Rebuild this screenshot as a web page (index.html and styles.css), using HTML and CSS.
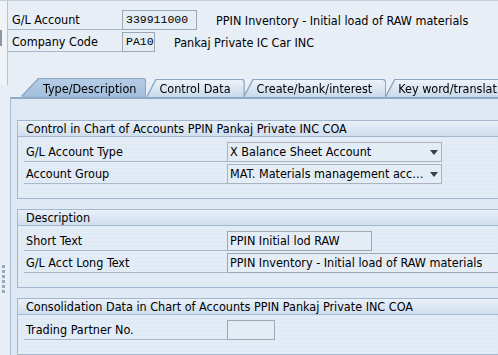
FILE: index.html
```html
<!DOCTYPE html>
<html lang="en">
<head>
    <meta charset="UTF-8">
    <title>Display G/L Account Centrally</title>
    <link rel="stylesheet" href="styles.css">
</head>
<body>
    <div class="screen">
        <div class="upper">
            <div class="gutter"><div class="nub"></div></div>
            <div class="upper-main">
                <div class="head">
                    <div class="row">
                        <span class="lbl">G/L Account</span>
                        <span class="field mono acct">339911000</span>
                        <span class="desc">PPIN Inventory - Initial load of RAW materials</span>
                    </div>
                    <div class="row">
                        <span class="lbl">Company Code</span>
                        <span class="field mono ccode">PA10</span>
                        <span class="desc">Pankaj Private IC Car INC</span>
                    </div>
                </div>

                <div class="tabs">
                    <div class="tab active"><div class="tab-face">Type/Description</div></div>
                    <div class="tab"><div class="tab-face">Control Data</div></div>
                    <div class="tab"><div class="tab-face">Create/bank/interest</div></div>
                    <div class="tab"><div class="tab-face">Key word/translation</div></div>
                </div>
            </div>
        </div>

        <div class="work">
            <div class="sash">
                <span class="grip"></span><span class="grip"></span><span class="grip"></span>
                <span class="grip"></span><span class="grip"></span><span class="grip"></span>
            </div>
            <div class="panel">
                <section class="group">
                    <div class="group-title">Control in Chart of Accounts PPIN Pankaj Private INC COA</div>
                    <div class="group-body">
                        <div class="row">
                            <span class="lbl">G/L Account Type</span>
                            <span class="field select">
                                <span class="select-text">X Balance Sheet Account</span>
                                <svg class="caret" width="8" height="5" viewBox="0 0 8 5"><polygon points="0,0 8,0 4,5" fill="#3a3f45"/></svg>
                            </span>
                        </div>
                        <div class="row">
                            <span class="lbl">Account Group</span>
                            <span class="field select">
                                <span class="select-text">MAT. Materials management accounts</span>
                                <svg class="caret" width="8" height="5" viewBox="0 0 8 5"><polygon points="0,0 8,0 4,5" fill="#3a3f45"/></svg>
                            </span>
                        </div>
                    </div>
                </section>

                <section class="group">
                    <div class="group-title">Description</div>
                    <div class="group-body">
                        <div class="row">
                            <span class="lbl">Short Text</span>
                            <span class="field short">PPIN Initial lod RAW</span>
                        </div>
                        <div class="row">
                            <span class="lbl">G/L Acct Long Text</span>
                            <span class="field long">PPIN Inventory - Initial load of RAW materials</span>
                        </div>
                    </div>
                </section>

                <section class="group">
                    <div class="group-title">Consolidation Data in Chart of Accounts PPIN Pankaj Private INC COA</div>
                    <div class="group-body">
                        <div class="row">
                            <span class="lbl">Trading Partner No.</span>
                            <span class="field partner"></span>
                        </div>
                    </div>
                </section>
            </div>
        </div>
    </div>
</body>
</html>
```

FILE: styles.css
```css
body {
    margin: 0;
    background-color: #e8eef6;
    font-family: "DejaVu Sans Condensed", "DejaVu Sans", sans-serif;
    font-stretch: condensed;
    font-size: 12.5px;
    color: #000;
    overflow: hidden;
}

.screen {
    width: 620px;
    height: 355px;
    overflow: hidden;
    border-top: 1px solid #c3d0de;
    box-sizing: border-box;
}

.upper {
    display: flex;
    align-items: flex-start;
}

.gutter {
    width: 7px;
    height: 84px;
    border-right: 1px solid #b4c2d2;
    background-color: #f0f4f9;
}

.nub {
    width: 2px;
    height: 16px;
    margin-top: 29px;
    background-color: #8e969f;
}

.upper-main {
    flex: 1;
}

.head {
    display: flex;
    flex-direction: column;
    gap: 2px;
    padding-top: 9px;
}

.row {
    display: flex;
    align-items: center;
    height: 20px;
}

.lbl {
    box-sizing: border-box;
    width: 114px;
    height: 20px;
    line-height: 20px;
    padding-left: 4px;
    border-bottom: 1px solid #a9b8c9;
    white-space: nowrap;
}

.field {
    box-sizing: border-box;
    height: 20px;
    line-height: 18px;
    padding: 0 3px;
    border: 1px solid #9ea8b3;
    background-color: #e4ecf5;
    white-space: nowrap;
    overflow: hidden;
}

.mono {
    font-family: "Liberation Mono", monospace;
    font-size: 11.5px;
}

.acct { width: 75px; }
.ccode { width: 33px; }

.desc {
    margin-left: 19px;
    white-space: nowrap;
}

/* tab strip */
.tabs {
    display: flex;
    align-items: flex-end;
    height: 19px;
    margin-top: 26px;
    padding-left: 14px;
}

.tab {
    margin-left: 1px;
    filter: drop-shadow(0 -1px 0 #8ea6c1) drop-shadow(1px 0 0 #8ea6c1) drop-shadow(-1px 0 0 #8ea6c1);
}

.tab.active {
    margin: 0 1px 0 0;
}

.tab-face {
    height: 17px;
    line-height: 17px;
    padding: 0 13px 0 12px;
    white-space: nowrap;
    border-top-right-radius: 3px;
    background: linear-gradient(#edf3f9, #c9d9eb);
    clip-path: polygon(9px 0, 100% 0, 100% 100%, 0 100%);
}

.tab.active .tab-face {
    height: 18px;
    line-height: 19px;
    padding: 0 9px 0 21px;
    background: linear-gradient(#b4cce6, #a3bedc);
    clip-path: polygon(17px 0, 100% 0, 100% 100%, 0 100%);
}

/* tab page */
.work {
    display: flex;
}

.sash {
    width: 10px;
    display: flex;
    flex-direction: column;
    gap: 2px;
    padding-top: 168px;
}

.grip {
    width: 3px;
    height: 3px;
    margin-left: 2px;
    background-color: #9aa7b6;
}

.panel {
    flex: 1;
    height: 256px;
    padding: 21px 0 0 6px;
    border-top: 2px solid #8eaacb;
    border-left: 1px solid #a7bacf;
    background-color: #dfe9f4;
}

.group {
    margin-bottom: 10px;
    border: 1px solid #a3b8cf;
    border-right: none;
    background-color: #e0eaf5;
    background-image: radial-gradient(circle, rgba(255, 255, 255, 0.45) 0.6px, transparent 0.8px);
    background-size: 4px 4px;
}

.group-title {
    height: 15px;
    line-height: 15px;
    padding-left: 8px;
    border-bottom: 1px solid #a3b8cf;
    background: linear-gradient(#e9f0f8, #d0deee);
    white-space: nowrap;
}

.group-body {
    display: flex;
    flex-direction: column;
    gap: 2px;
    padding: 5px 0 14px 6px;
}

.group-body .lbl {
    width: 203px;
    padding-left: 2px;
}

.select {
    display: flex;
    align-items: center;
    width: 215px;
    padding: 0 3px 0 2px;
    border-color: #aab4bf;
}

.select-text {
    flex: 1;
    overflow: hidden;
    text-overflow: ellipsis;
}

.caret {
    margin-left: 1px;
}

.short { width: 145px; padding-left: 2px; }
.long { width: 300px; padding-left: 2px; }
.partner { width: 48px; }
```
